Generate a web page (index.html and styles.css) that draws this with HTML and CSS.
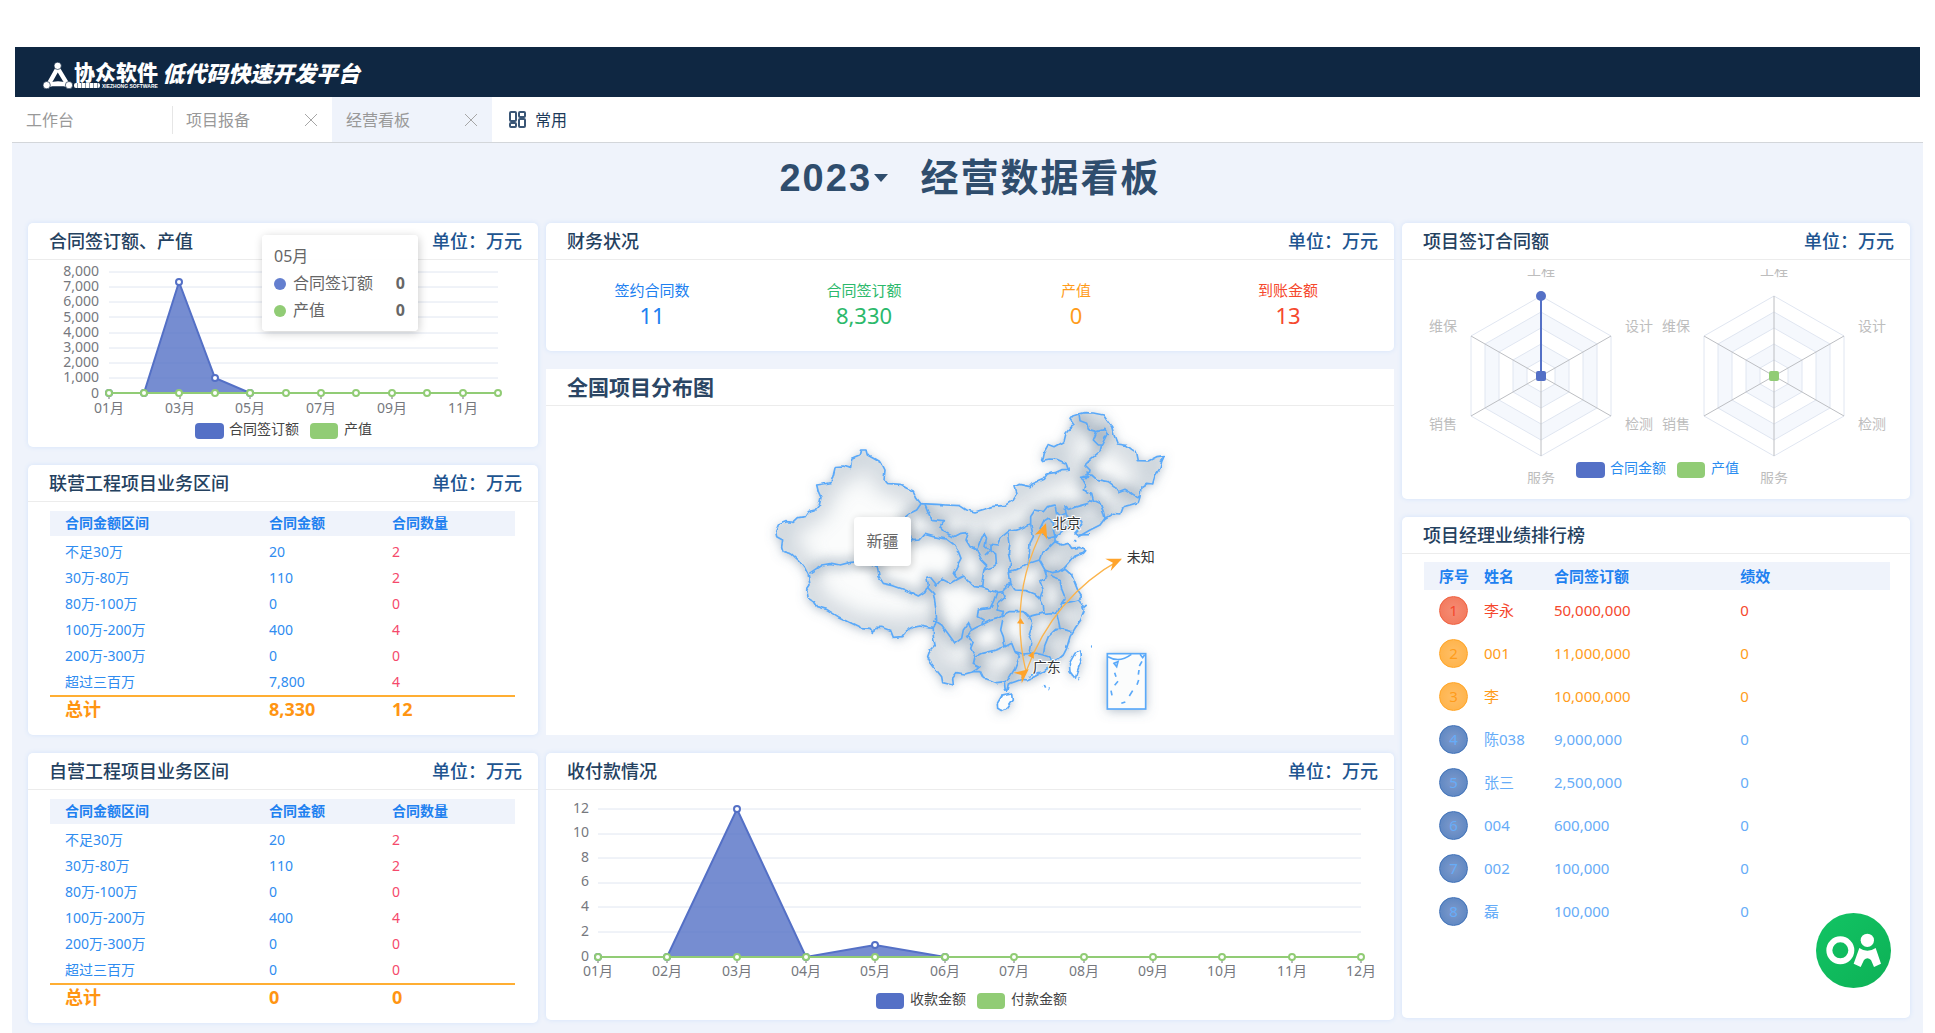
FILE: index.html
```html
<!DOCTYPE html>
<html lang="zh-CN">
<head>
<meta charset="utf-8">
<title>经营数据看板</title>
<link rel="stylesheet" href="styles.css">
</head>
<body>
<header class="topbar">
  <svg class="logo-mark" viewBox="0 0 90 80" aria-hidden="true">
    <path d="M44 18 L17 66 L73 66 Z" fill="none" stroke="#fff" stroke-width="13" stroke-linejoin="round"/>
    <path d="M44 40 L52 54 L36 54 Z" fill="#0f2742"/>
    <path d="M19 69 Q45 57 71 69" fill="none" stroke="#fff" stroke-width="11"/>
    <circle cx="44" cy="11" r="11" fill="#fff" stroke="#0f2742" stroke-width="2"/>
    <circle cx="11" cy="69" r="11" fill="#fff" stroke="#0f2742" stroke-width="2"/>
    <circle cx="78" cy="69" r="11" fill="#fff" stroke="#0f2742" stroke-width="2"/>
  </svg>
  <div class="brand">
    <span class="brand-name">协众软件</span>
    <span class="brand-sub"><i class="brand-chip"></i>XIEZHONG SOFTWARE</span>
  </div>
  <span class="slogan">低代码快速开发平台</span>
</header>

<div class="shell">
  <nav class="tabs">
    <a class="tab" href="#home">工作台</a>
    <div class="tab tab-split"><a href="#report">项目报备</a><button class="close" type="button" aria-label="关闭"><svg viewBox="0 0 12 12"><path d="M0 0L12 12M12 0L0 12"/></svg></button></div>
    <div class="tab tab-active"><a href="#board">经营看板</a><button class="close" type="button" aria-label="关闭"><svg viewBox="0 0 12 12"><path d="M0 0L12 12M12 0L0 12"/></svg></button></div>
    <button class="common" type="button">
      <svg viewBox="0 0 18 17"><rect x="1" y="1" width="6" height="9" rx="1"/><rect x="10" y="1" width="6" height="5" rx="1"/><rect x="1" y="12" width="6" height="4" rx="1"/><rect x="10" y="8" width="6" height="8" rx="1"/></svg>
      常用
    </button>
  </nav>

  <main class="board">
    <h1 class="board-title">
      <span class="year"><select aria-label="年份"><option>2023</option></select></span>
      经营数据看板
    </h1>

    <div class="columns">
      <div class="column">
        <section class="panel">
          <header class="panel-head"><h2>合同签订额、产值</h2><span class="unit">单位：万元</span></header>
          <svg class="chart" viewBox="0 0 510 187">
            <defs>
              <marker id="dot-blue" markerUnits="userSpaceOnUse" markerWidth="10" markerHeight="10" refX="5" refY="5"><circle cx="5" cy="5" r="3" fill="#fff" stroke="#5470c6" stroke-width="2"/></marker>
              <marker id="dot-green" markerUnits="userSpaceOnUse" markerWidth="10" markerHeight="10" refX="5" refY="5"><circle cx="5" cy="5" r="3" fill="#fff" stroke="#91cc75" stroke-width="2"/></marker>
            </defs>
            <path class="grid" d="M81 12H470M81 27H470M81 42H470M81 57H470M81 73H470M81 88H470M81 103H470M81 118H470"/>
            <g class="axis end">
              <text x="71" y="16">8,000</text><text x="71" y="31">7,000</text><text x="71" y="46">6,000</text><text x="71" y="62">5,000</text><text x="71" y="77">4,000</text><text x="71" y="92">3,000</text><text x="71" y="107">2,000</text><text x="71" y="122">1,000</text><text x="71" y="138">0</text>
            </g>
            <path class="ticks" d="M81 133V139M152 133V139M222 133V139M293 133V139M364 133V139M435 133V139"/>
            <g class="axis mid">
              <text x="81" y="153">01月</text><text x="152" y="153">03月</text><text x="222" y="153">05月</text><text x="293" y="153">07月</text><text x="364" y="153">09月</text><text x="435" y="153">11月</text>
            </g>
            <path class="area" d="M116 133L151 22L187 118L222 133Z"/>
            <polyline class="line blue" points="81,133 116,133 151,22 187,118 222,133 470,133"/>
            <polyline class="line green" points="81,133 116,133 151,133 187,133 222,133 258,133 293,133 328,133 364,133 399,133 435,133 470,133"/>
            <rect x="167" y="163" width="29" height="16" rx="4" fill="#5470c6"/><text class="legend" x="201" y="174">合同签订额</text>
            <rect x="282" y="163" width="28" height="16" rx="4" fill="#91cc75"/><text class="legend" x="316" y="174">产值</text>
          </svg>
          <div class="tip">
            <div>05月</div>
            <div class="tip-row"><i class="dot dot-b"></i>合同签订额<b>0</b></div>
            <div class="tip-row"><i class="dot dot-g"></i>产值<b>0</b></div>
          </div>
        </section>

        <section class="panel tall">
          <header class="panel-head"><h2>联营工程项目业务区间</h2><span class="unit">单位：万元</span></header>
          <table class="range">
            <thead><tr><th>合同金额区间</th><th>合同金额</th><th>合同数量</th></tr></thead>
            <tbody>
              <tr><td>不足30万</td><td>20</td><td>2</td></tr>
              <tr><td>30万-80万</td><td>110</td><td>2</td></tr>
              <tr><td>80万-100万</td><td>0</td><td>0</td></tr>
              <tr><td>100万-200万</td><td>400</td><td>4</td></tr>
              <tr><td>200万-300万</td><td>0</td><td>0</td></tr>
              <tr><td>超过三百万</td><td>7,800</td><td>4</td></tr>
            </tbody>
            <tfoot><tr><td>总计</td><td>8,330</td><td>12</td></tr></tfoot>
          </table>
        </section>

        <section class="panel tall">
          <header class="panel-head"><h2>自营工程项目业务区间</h2><span class="unit">单位：万元</span></header>
          <table class="range">
            <thead><tr><th>合同金额区间</th><th>合同金额</th><th>合同数量</th></tr></thead>
            <tbody>
              <tr><td>不足30万</td><td>20</td><td>2</td></tr>
              <tr><td>30万-80万</td><td>110</td><td>2</td></tr>
              <tr><td>80万-100万</td><td>0</td><td>0</td></tr>
              <tr><td>100万-200万</td><td>400</td><td>4</td></tr>
              <tr><td>200万-300万</td><td>0</td><td>0</td></tr>
              <tr><td>超过三百万</td><td>0</td><td>0</td></tr>
            </tbody>
            <tfoot><tr><td>总计</td><td>0</td><td>0</td></tr></tfoot>
          </table>
        </section>
      </div>

      <div class="column">
        <section class="panel">
          <header class="panel-head"><h2>财务状况</h2><span class="unit">单位：万元</span></header>
          <dl class="stats">
            <div class="c-blue"><dt>签约合同数</dt><dd>11</dd></div>
            <div class="c-green"><dt>合同签订额</dt><dd>8,330</dd></div>
            <div class="c-orange"><dt>产值</dt><dd>0</dd></div>
            <div class="c-red"><dt>到账金额</dt><dd>13</dd></div>
          </dl>
        </section>

        <section class="panel panel-map">
          <header class="panel-head"><h2>全国项目分布图</h2></header>
          <div class="map">
            <svg viewBox="0 48 1260 984">
              <defs>
                <filter id="outer" x="-10%" y="-10%" width="120%" height="120%"><feDropShadow dx="0" dy="6" stdDeviation="16" flood-color="#5f7890" flood-opacity=".5"/></filter>
                <filter id="soft" x="-10%" y="-10%" width="120%" height="120%"><feGaussianBlur stdDeviation="17"/></filter>
                <filter id="wide" x="-10%" y="-10%" width="120%" height="120%"><feGaussianBlur stdDeviation="32"/></filter>
                <filter id="coast" x="-5%" y="-5%" width="110%" height="110%"><feTurbulence type="fractalNoise" baseFrequency=".05" numOctaves="1" seed="4"/><feDisplacementMap in="SourceGraphic" scale="12" xChannelSelector="R" yChannelSelector="G"/></filter>
                <path id="nation" d="M47 425L55 405L80 395L100 397L115 383L135 380L145 365L165 360L178 345L183 322L175 305L170 285L190 282L213 278L220 255L226 230L250 228L272 235L275 205L298 195L302 180L318 180L322 195L345 208L365 220L375 240L372 268L382 280L420 283L440 295L460 303L470 325L483 341L530 343L560 345L600 347L620 360L645 366L680 355L700 349L735 346L760 330L772 312L765 290L778 283L795 287L810 290L815 283L850 268L862 252L885 248L905 239L925 238L918 220L890 208L868 207L845 212L850 190L865 163L885 170L912 155L918 130L930 115L942 105L930 88L938 78L957 72L975 68L1000 69L1030 75L1040 90L1055 110L1062 135L1072 162L1100 166L1115 178L1130 188L1135 212L1165 213L1190 200L1213 197L1205 215L1200 235L1185 258L1178 282L1160 280L1143 290L1140 320L1135 337L1110 345L1090 350L1082 372L1060 370L1035 385L1020 405L990 420L955 440L945 432L960 415L968 400L960 388L945 385L930 400L915 415L905 425L885 440L885 455L905 465L925 460L935 475L960 472L977 482L970 490L945 498L930 515L912 535L935 555L945 580L955 605L965 620L955 630L968 645L972 665L962 690L945 715L930 740L920 775L910 795L890 812L870 830L850 845L820 862L800 870L785 868L765 875L745 882L740 905L735 895L733 875L710 878L690 870L670 865L660 845L640 845L615 852L590 848L578 865L580 885L565 882L548 878L545 860L525 835L510 815L503 800L510 780L525 765L520 740L520 715L500 712L480 708L460 712L440 722L425 740L400 742L392 722L365 712L345 712L340 730L330 715L300 712L275 700L260 692L235 680L200 658L170 650L160 635L145 625L140 600L150 585L145 555L135 535L120 515L95 492L70 485L65 470L68 450L50 440Z"/>
                <path id="islands" d="M712 940L725 918L755 912L757 930L740 955L725 962L713 955ZM962 783L965 810L955 835L945 865L930 845L928 820L945 790Z"/>
                <path id="borders" d="M483 341L470 360L450 370L437 380L430 400L450 430L455 452L380 470L352 530L310 515L270 517L240 525L215 520L185 525L170 535L148 550M352 530L357 560L370 580L400 587L430 598L455 608L475 618L495 605L505 585L500 560M500 590L520 610L527 650L530 690L522 715M493 341L505 370L512 388L550 392L540 410L560 430L580 440L600 430L625 428L618 450L630 470L650 480L660 455L672 430L680 445L675 470L690 480M650 480L665 510L680 525L672 540L700 530L712 520L710 495L690 480L675 495M455 452L480 450L495 433L520 440L560 447L580 462L595 485L603 505L590 530L580 550L592 567L570 580L545 567L530 585L510 560L500 562M592 567L610 558L625 575L640 590L665 592L668 560L672 540M665 592L690 600L710 608L730 605L735 585L755 580M690 480L690 462L712 465L720 445L745 425L778 418L810 402M745 425L750 460L745 490L752 520L748 545L752 580L765 600M748 545L785 533L805 522L808 490L810 460L820 440L812 402M812 402L812 380L825 360L850 365L862 350L885 345L890 370L900 378L918 370L915 350L925 358L950 350L985 340L1000 330L1020 340L1030 365L1035 385M918 370L930 400M1000 330L995 310L970 300L975 285L962 262L985 262L985 245M962 262L995 255L1010 268L1045 275L1065 290L1075 305L1095 298L1115 310L1130 320L1140 320M957 72L960 92L980 100L985 118L1010 125L1035 118L1042 130L1025 165L1020 185L995 205L975 225L990 240L985 262M1010 125L1000 150L1015 165L1025 165M850 395L862 388L880 398L880 420L885 440L865 445L850 430L840 415ZM885 455L860 480L845 490L838 510L855 540M808 520L838 510M855 540L875 548L895 545L912 535M855 540L860 560L840 575L850 600L845 610L840 625L850 645L852 670L880 668L890 672L905 640M765 600L800 602L825 612L840 625M870 555L900 570L905 600L915 625L905 640L935 635L955 630M890 672L897 700L900 715L935 725M725 678L750 665L790 665L805 680L852 668M755 580L730 600L735 620L710 640L712 660L730 665L725 678M710 608L700 635L690 655L655 660L652 680L670 690L665 705L690 692L715 685L725 678M522 690L545 705L560 725L585 760L605 745L610 720L625 700L635 720L650 712L665 705M635 720L620 740L640 755L632 775L645 800L665 790L700 782L735 770L730 740L722 720L728 690M645 800L640 820L660 830L640 845M735 770L755 760L765 785L778 800L765 835L750 860L733 875M805 680L815 700L805 730L815 760L810 790M765 785L790 792L810 790L830 790L850 795L855 765L865 740L890 715L900 715M850 795L865 800L880 815"/>
                <clipPath id="land"><use href="#nation"/></clipPath>
              </defs>
              <g filter="url(#outer)" fill="#fbfcfc"><use href="#nation"/><use href="#islands"/><rect x="1042" y="791" width="115" height="166"/></g>
              <g clip-path="url(#land)" fill="none" stroke="#8496a8">
                <g filter="url(#wide)" opacity=".4"><use href="#nation" stroke-width="60"/></g>
                <g filter="url(#soft)" opacity=".7"><use href="#borders" stroke-width="22"/></g>
              </g>
              <g filter="url(#coast)" fill="none" stroke="#5aa9f9" stroke-width="5" stroke-linejoin="round">
                <use href="#nation"/><use href="#borders"/><use href="#islands"/>
                <path d="M940 450L946 455M955 435L990 434M968 655L980 645M850 885L854 893M866 896L870 900M955 863L960 866M990 770L995 771M805 860L825 850L855 845"/>
              </g>
              <g fill="none" stroke="#5aa9f9" stroke-width="5">
                <rect x="1042" y="791" width="115" height="166"/>
                <path d="M1044 800Q1078 820 1114 793M1140 793L1148 803L1154 794M1062 820L1074 815L1070 830ZM1064 848L1068 860M1064 886L1074 874M1053 902L1056 916M1084 940L1096 936M1108 918L1118 902M1131 884L1136 870M1135 854L1137 840M1138 828L1146 814"/>
              </g>
              <g fill="none" stroke="#fbb44c" stroke-width="4"><path d="M798 845Q743 615 855 405M798 845Q880 620 1082 508"/></g>
              <g fill="#ffa42c">
                <path transform="translate(858 400) rotate(20)" d="M0 0L20 44L0 32L-20 44Z"/>
                <path transform="translate(1086 506) rotate(66)" d="M0 0L20 46L0 30L-20 46Z"/>
                <path transform="translate(806 838) rotate(52)" d="M0 0L20 42L0 28L-20 42Z"/>
                <path d="M782 684L793 702L771 700ZM820 784L822 806L804 797Z"/>
              </g>
              <g class="place"><text x="878" y="414">北京</text><text x="1100" y="516">未知</text><text x="818" y="847">广东</text></g>
            </svg>
            <div class="map-tip">新疆</div>
          </div>
        </section>

        <section class="panel">
          <header class="panel-head"><h2>收付款情况</h2><span class="unit">单位：万元</span></header>
          <svg class="chart" viewBox="0 0 848 230">
            <path class="grid" d="M52 19H815M52 44H815M52 68H815M52 93H815M52 117H815M52 142H815"/>
            <g class="axis end">
              <text x="43" y="23">12</text><text x="43" y="47">10</text><text x="43" y="72">8</text><text x="43" y="96">6</text><text x="43" y="121">4</text><text x="43" y="146">2</text><text x="43" y="171">0</text>
            </g>
            <path class="ticks" d="M52 167V173M121 167V173M191 167V173M260 167V173M329 167V173M399 167V173M468 167V173M538 167V173M607 167V173M676 167V173M746 167V173M815 167V173"/>
            <g class="axis mid">
              <text x="52" y="186">01月</text><text x="121" y="186">02月</text><text x="191" y="186">03月</text><text x="260" y="186">04月</text><text x="329" y="186">05月</text><text x="399" y="186">06月</text><text x="468" y="186">07月</text><text x="538" y="186">08月</text><text x="607" y="186">09月</text><text x="676" y="186">10月</text><text x="746" y="186">11月</text><text x="815" y="186">12月</text>
            </g>
            <path class="area" d="M121 167L191 19L260 167L329 155L399 167Z"/>
            <polyline class="line blue" points="52,167 121,167 191,19 260,167 329,155 399,167 815,167"/>
            <polyline class="line green" points="52,167 121,167 191,167 260,167 329,167 399,167 468,167 538,167 607,167 676,167 746,167 815,167"/>
            <rect x="330" y="203" width="28" height="16" rx="4" fill="#5470c6"/><text class="legend" x="364" y="214">收款金额</text>
            <rect x="431" y="203" width="28" height="16" rx="4" fill="#91cc75"/><text class="legend" x="465" y="214">付款金额</text>
          </svg>
        </section>
      </div>

      <div class="column">
        <section class="panel panel-radar">
          <header class="panel-head"><h2>项目签订合同额</h2><span class="unit">单位：万元</span></header>
          <svg class="chart radar" viewBox="0 9 508 215">
            <defs>
              <g id="web" stroke="#e0e6f1">
                <path fill="#fff" d="M0 -80L70 -40V40L0 80L-70 40V-40Z"/>
                <path fill="#f5f8fd" d="M0 -64L56 -32V32L0 64L-56 32V-32Z"/>
                <path fill="#fff" d="M0 -48L42 -24V24L0 48L-42 24V-24Z"/>
                <path fill="#f5f8fd" d="M0 -32L28 -16V16L0 32L-28 16V-16Z"/>
                <path fill="#fff" d="M0 -16L14 -8V8L0 16L-14 8V-8Z"/>
                <path stroke="#bcbec2" d="M0 -80V80M-70 -40L70 40M70 -40L-70 40"/>
              </g>
            </defs>
            <use href="#web" x="139" y="116"/><use href="#web" x="372" y="116"/>
            <path d="M139 36V116" stroke="#5470c6" stroke-width="2"/>
            <circle cx="139" cy="36" r="5" fill="#5470c6"/><rect x="134" y="111" width="10" height="10" rx="2" fill="#5470c6"/>
            <rect x="367" y="111" width="10" height="10" rx="2" fill="#91cc75"/>
            <g class="axis pale">
              <text class="center" x="139" y="15">工程</text><text x="223" y="71">设计</text><text x="223" y="169">检测</text><text class="center" x="139" y="223">服务</text><text x="27" y="169">销售</text><text x="27" y="71">维保</text>
              <text class="center" x="372" y="15">工程</text><text x="456" y="71">设计</text><text x="456" y="169">检测</text><text class="center" x="372" y="223">服务</text><text x="260" y="169">销售</text><text x="260" y="71">维保</text>
            </g>
            <rect x="174" y="202" width="29" height="16" rx="4" fill="#5470c6"/><text class="legend legend-blue" x="208" y="213">合同金额</text>
            <rect x="275" y="202" width="28" height="16" rx="4" fill="#91cc75"/><text class="legend legend-blue" x="309" y="213">产值</text>
          </svg>
        </section>

        <section class="panel panel-rank">
          <header class="panel-head"><h2>项目经理业绩排行榜</h2></header>
          <table class="rank">
            <thead><tr><th>序号</th><th>姓名</th><th>合同签订额</th><th>绩效</th></tr></thead>
            <tbody>
              <tr class="r-red"><td><span class="no">1</span></td><td>李永</td><td>50,000,000</td><td>0</td></tr>
              <tr class="r-gold"><td><span class="no">2</span></td><td>001</td><td>11,000,000</td><td>0</td></tr>
              <tr class="r-gold"><td><span class="no">3</span></td><td>李</td><td>10,000,000</td><td>0</td></tr>
              <tr><td><span class="no">4</span></td><td>陈038</td><td>9,000,000</td><td>0</td></tr>
              <tr><td><span class="no">5</span></td><td>张三</td><td>2,500,000</td><td>0</td></tr>
              <tr><td><span class="no">6</span></td><td>004</td><td>600,000</td><td>0</td></tr>
              <tr><td><span class="no">7</span></td><td>002</td><td>100,000</td><td>0</td></tr>
              <tr><td><span class="no">8</span></td><td>磊</td><td>100,000</td><td>0</td></tr>
            </tbody>
          </table>
        </section>
      </div>
    </div>
  </main>
</div>

<button class="oa" type="button" aria-label="OA">
  <svg viewBox="0 0 225 225"><circle cx="73" cy="112" r="33" fill="none" stroke="#fff" stroke-width="18"/><circle cx="154" cy="82" r="20" fill="#fff"/><path fill="#fff" d="M130 105Q154 122 179 105L195 152L174 162L165 141Q154 131 144 141L134 162L113 152Z"/></svg>
</button>
</body>
</html>
```
FILE: styles.css
```css
* { box-sizing: border-box; }
body {
  margin: 0;
  padding-top: 47px;
  background: #fff;
  font: 14px/20px "Noto Sans", "Noto Sans CJK SC", sans-serif;
  color: #666;
}
h1, h2, dl, dd { margin: 0; }
a { color: inherit; text-decoration: none; }
button { border: 0; padding: 0; background: none; font: inherit; color: inherit; }
svg { display: block; }

.topbar {
  display: flex;
  align-items: center;
  height: 50px;
  margin: 0 15px;
  padding: 6px 0 0 28px;
  background: #0f2742;
  color: #fff;
}
.logo-mark { width: 30px; height: 27px; }
.brand { display: flex; flex-direction: column; margin-left: 1px; }
.brand-name { font-size: 21px; line-height: 21px; font-weight: 900; }
.brand-sub { display: flex; align-items: center; gap: 2px; font: 700 5px/6px "Liberation Sans", sans-serif; }
.brand-chip { width: 26px; height: 5px; border-radius: 2px; background: repeating-linear-gradient(90deg, #fff 0 3px, #8a97a6 3px 4px); }
.slogan { margin-left: 4px; font-size: 22px; line-height: 26px; font-weight: 900; font-style: italic; padding-bottom: 4px; }

.shell { margin: 0 12px; }
.tabs {
  display: flex;
  height: 46px;
  border-bottom: 1px solid #d3d6da;
  font-size: 16px;
  color: #999;
}
.tab { display: flex; align-items: center; justify-content: space-between; width: 160px; padding: 0 15px 0 14px; }
.tab-split { background: linear-gradient(#e6e6e6, #e6e6e6) no-repeat 0 50% / 1px 28px; }
.tab-active { background: #eff3fb; }
.close { width: 12px; height: 12px; }
.close svg { width: 12px; height: 12px; stroke: #a6a6a6; fill: none; overflow: visible; }
.common { display: flex; align-items: center; gap: 8px; margin-left: 17px; color: #1d3a5a; }
.common svg { width: 18px; height: 17px; fill: none; stroke: #3a5676; stroke-width: 2; }

.board { min-height: calc(100vh - 93px); padding: 0 13px 11px 16px; background: #eff3fb; }
.board-title {
  display: flex;
  align-items: center;
  justify-content: center;
  gap: 32px;
  height: 80px;
  padding: 0 0 10px 2px;
  font: 700 38px/56px "Liberation Sans", "Noto Sans CJK SC", sans-serif;
  letter-spacing: 2px;
  color: #2f4d6d;
}
.year { display: flex; align-items: center; gap: 2px; }
.year::after { content: ""; border: solid transparent; border-width: 8px 7px 0; border-top-color: #2f4d6d; }
.year select {
  appearance: none;
  border: 0;
  padding: 0;
  background: none;
  font: inherit;
  letter-spacing: inherit;
  color: inherit;
}

.columns { display: grid; grid-template-columns: 510fr 848fr 508fr; gap: 8px; align-items: start; }
.column { display: flex; flex-direction: column; gap: 18px; min-width: 0; }
.panel {
  position: relative;
  border-radius: 5px;
  background: #fff;
  box-shadow: 0 0 5px #d3e3fa;
}
.tall { min-height: 270px; }
.panel-map { border-radius: 0; box-shadow: none; }
.panel-rank { min-height: 501px; }
.panel-head {
  display: flex;
  align-items: center;
  justify-content: space-between;
  height: 37px;
  padding: 0 16px 0 21px;
  border-bottom: 1px solid #ececec;
}
.panel-head h2 { font-size: 18px; line-height: 26px; font-weight: 500; color: #24415f; }
.panel-map h2 { font-size: 21px; font-weight: 700; color: #2b4664; }
.unit { font-size: 18px; line-height: 26px; font-weight: 500; color: #205490; }

.chart { width: 100%; height: auto; }
.grid { fill: none; stroke: #e0e6f1; }
.ticks { fill: none; stroke: #6e7079; }
.axis { fill: #76787e; font-size: 14px; }
.end { text-anchor: end; }
.mid, .center { text-anchor: middle; }
.pale { fill: #bdbdbd; }
.area { fill: #5470c6; opacity: .8; }
.line { fill: none; stroke-width: 2; }
.blue { stroke: #5470c6; marker-start: url(#dot-blue); marker-mid: url(#dot-blue); }
.green { stroke: #91cc75; marker-start: url(#dot-green); marker-mid: url(#dot-green); marker-end: url(#dot-green); }
.legend { fill: #444; font-size: 14px; }
.legend-blue { fill: #2a8cf0; }

.tip {
  position: absolute;
  left: 234px;
  top: 12px;
  width: 156px;
  height: 96px;
  padding: 8px 13px 8px 12px;
  border-radius: 4px;
  background: rgba(255, 255, 255, .95);
  box-shadow: 1px 2px 10px rgba(0, 0, 0, .2);
  font-size: 16px;
  line-height: 27px;
}
.tip-row { display: flex; align-items: center; gap: 7px; }
.tip-row b { margin-left: auto; }
.dot { width: 12px; height: 12px; border-radius: 50%; }
.dot-b { background: #647fcf; }
.dot-g { background: #91cc75; }

table { border-collapse: separate; border-spacing: 0; table-layout: fixed; text-align: left; }
th, td { padding: 0 0 0 15px; }
th { background: #eff3fb; font-weight: 700; color: #2080f0; }
.range { width: calc(100% - 45px); margin: 9px 23px 0 22px; }
.range th { height: 25px; padding-bottom: 2px; }
.range th:nth-child(1) { width: 204px; }
.range th:nth-child(2) { width: 123px; }
.range td { height: 26px; color: #2f8cf0; }
.range td:nth-child(3) { color: #f5496b; }
.range tbody::before { content: ""; display: table-row; height: 3px; }
.range tfoot td { border-top: 2px solid #ffae33; font-size: 18px; font-weight: 700; }
.range tfoot td, .range tfoot td:nth-child(3) { color: #ff9512; }

.stats { display: grid; grid-template-columns: repeat(4, 1fr); height: 91px; padding-top: 19px; text-align: center; }
.stats dt { font-size: 15px; line-height: 22px; }
.stats dd { font-size: 22px; line-height: 28px; }
.c-blue { color: #2080f0; }
.c-green { color: #2bb96b; }
.c-orange { color: #ff9c1a; }
.c-red { color: #f5482d; }

.map { position: relative; width: 420px; margin: 0 auto; padding-bottom: 1px; }
.map svg { width: 420px; height: 328px; }
.place { fill: #333; stroke: #fff; stroke-width: 6px; paint-order: stroke; font-size: 42px; }
.map-tip {
  position: absolute;
  left: 94px;
  top: 111px;
  width: 57px;
  height: 49px;
  border-radius: 4px;
  background: #fff;
  box-shadow: 1px 2px 8px rgba(0, 0, 0, .2);
  font-size: 16px;
  line-height: 49px;
  text-align: center;
}

.panel-radar { padding-bottom: 15px; }
.radar { margin-top: 9px; overflow: hidden; }

.rank { width: calc(100% - 42px); margin: 8px 20px 0 22px; font-size: 15px; }
.rank th, .rank td { padding: 0; }
.rank th:first-child, .rank td:first-child { padding-left: 15px; }
.rank th { height: 28px; }
.rank th:nth-child(1) { width: 60px; }
.rank th:nth-child(2) { width: 15%; }
.rank th:nth-child(3) { width: 40%; }
.rank td { height: 43px; padding-bottom: 3px; color: #66acf8; }
.rank .r-red td { color: #f5482d; }
.rank .r-gold td { color: #ff9c1a; }
.no {
  display: block;
  width: 29px;
  height: 29px;
  border: 1px solid #3f71b8;
  border-radius: 50%;
  background: radial-gradient(circle, #7e9acb, #5682c0);
  line-height: 27px;
  text-align: center;
}
.r-red .no { border-color: #f0603f; background: radial-gradient(circle, #f58c74, #f27558); }
.r-gold .no { border-color: #ffa424; background: radial-gradient(circle, #ffbe66, #ffb143); }

.oa {
  position: fixed;
  right: 44px;
  bottom: 45px;
  width: 75px;
  height: 75px;
  border-radius: 50%;
  background: linear-gradient(135deg, #12c464, #0db156);
}
```
